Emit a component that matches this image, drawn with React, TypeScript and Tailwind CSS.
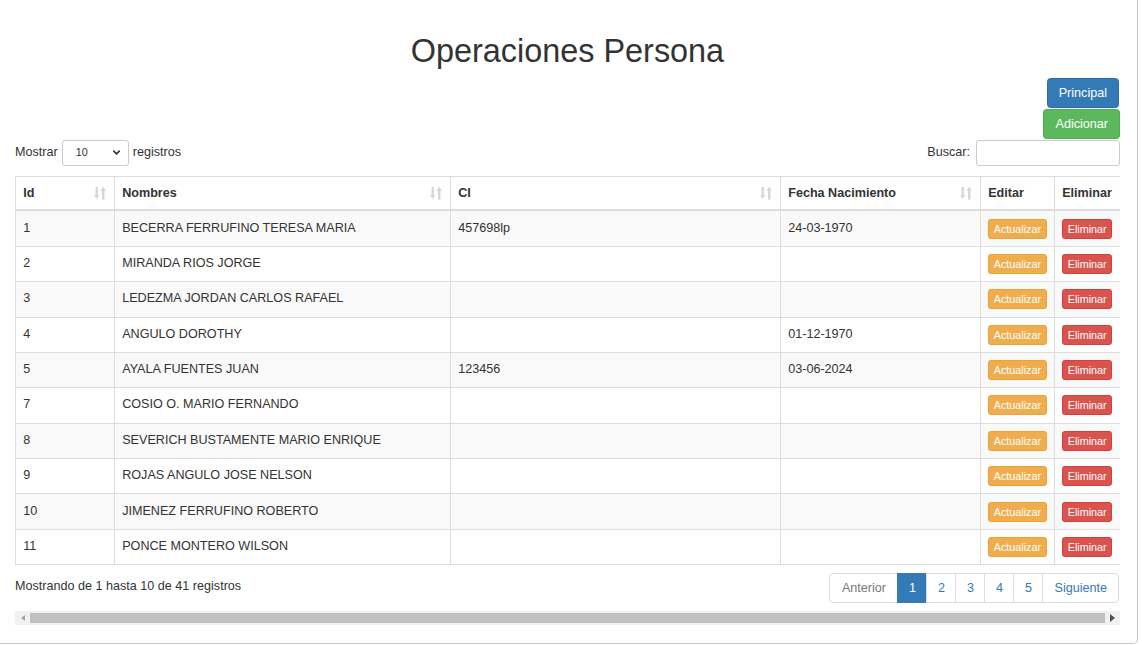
import { ChevronDown } from 'lucide-react';

type Persona = { id: number; nombre: string; ci: string; fecha: string };

const personas: Persona[] = [
  { id: 1, nombre: 'BECERRA FERRUFINO TERESA MARIA', ci: '457698lp', fecha: '24-03-1970' },
  { id: 2, nombre: 'MIRANDA RIOS JORGE', ci: '', fecha: '' },
  { id: 3, nombre: 'LEDEZMA JORDAN CARLOS RAFAEL', ci: '', fecha: '' },
  { id: 4, nombre: 'ANGULO DOROTHY', ci: '', fecha: '01-12-1970' },
  { id: 5, nombre: 'AYALA FUENTES JUAN', ci: '123456', fecha: '03-06-2024' },
  { id: 7, nombre: 'COSIO O. MARIO FERNANDO', ci: '', fecha: '' },
  { id: 8, nombre: 'SEVERICH BUSTAMENTE MARIO ENRIQUE', ci: '', fecha: '' },
  { id: 9, nombre: 'ROJAS ANGULO JOSE NELSON', ci: '', fecha: '' },
  { id: 10, nombre: 'JIMENEZ FERRUFINO ROBERTO', ci: '', fecha: '' },
  { id: 11, nombre: 'PONCE MONTERO WILSON', ci: '', fecha: '' },
];

// icono de orden (flecha abajo + flecha arriba)
function SortIcon() {
  return (
    <svg width="12" height="14" viewBox="0 0 12 14" className="absolute right-[8px] top-[9px]" fill="#d6d6d6">
      <rect x="1.5" y="1" width="2.4" height="9" />
      <path d="M0 9 L5.4 9 L2.7 13 Z" />
      <rect x="8" y="4" width="2.4" height="9.5" />
      <path d="M6.5 5 L11.9 5 L9.2 0.5 Z" />
    </svg>
  );
}

const th = 'relative border border-[#ddd] border-b-2 px-[7.2px] py-[7.2px] text-left font-bold leading-[18px]';
const td = 'border border-[#ddd] px-[7.2px] py-[7.2px] align-top leading-[18px]';

export default function App() {
  return (
    <div className="w-[1138px] h-[644px] bg-white border-r border-b border-[#c8c8c8] rounded-br-[5px] text-[#333] text-[12.6px]" style={{ fontFamily: '"Liberation Sans", Arial, sans-serif' }}>
      <div className="ml-[15px] w-[1105px]">
        <h1 className="pt-[33px] mb-[9px] text-center text-[32.4px] leading-[36px] font-normal">Operaciones Persona</h1>

        <div className="flex flex-col items-end gap-[1px]">
          <button className="h-[30px] px-[11px] mr-[1px] rounded-[3.6px] border border-[#2e6da4] bg-[#337ab7] text-white leading-[18px]">Principal</button>
          <button className="h-[30px] px-[11px] rounded-[3.6px] border border-[#4cae4c] bg-[#5cb85c] text-white leading-[18px]">Adicionar</button>
        </div>

        <div className="flex items-center justify-between h-[27px]">
          <div className="flex items-center">
            <span>Mostrar</span>
            <div className="ml-[4px] w-[67px] h-[26px] border border-[#ccc] rounded-[3px] flex items-center justify-between pl-[13px] pr-[6px] text-[10.8px]">
              <span>10</span>
              <ChevronDown size={11} strokeWidth={3.5} color="#333" />
            </div>
            <span className="ml-[4px]">registros</span>
          </div>
          <div className="flex items-center">
            <span>Buscar:</span>
            <div className="ml-[6px] w-[144px] h-[26px] border border-[#ccc] rounded-[3px]" />
          </div>
        </div>

        <div className="mt-[10px] w-[1105px] overflow-hidden">
          <table className="table-fixed border-collapse w-[1125px]">
            <colgroup>
              <col className="w-[99px]" />
              <col className="w-[336px]" />
              <col className="w-[330px]" />
              <col className="w-[200px]" />
              <col className="w-[74px]" />
              <col className="w-[86px]" />
            </colgroup>
            <thead>
              <tr>
                <th className={th}>Id<SortIcon /></th>
                <th className={th}>Nombres<SortIcon /></th>
                <th className={th}>CI<SortIcon /></th>
                <th className={th}>Fecha Nacimiento<SortIcon /></th>
                <th className={th}>Editar</th>
                <th className={th}>Eliminar</th>
              </tr>
            </thead>
            <tbody>
              {personas.map((p, i) => (
                <tr key={p.id} className={i % 2 === 0 ? 'bg-[#f9f9f9]' : 'bg-white'}>
                  <td className={td}>{p.id}</td>
                  <td className={td}>{p.nombre}</td>
                  <td className={td}>{p.ci}</td>
                  <td className={td}>{p.fecha}</td>
                  <td className={td}>
                    <button className="h-[20px] px-[4.5px] rounded-[2.7px] border border-[#eea236] bg-[#f0ad4e] text-white text-[10.8px] leading-[16px]">Actualizar</button>
                  </td>
                  <td className={td}>
                    <button className="h-[20px] px-[4.5px] rounded-[2.7px] border border-[#d43f3a] bg-[#d9534f] text-white text-[10.8px] leading-[16px]">Eliminar</button>
                  </td>
                </tr>
              ))}
            </tbody>
          </table>
        </div>

        <div className="mt-[8px] flex items-start justify-between">
          <div className="pt-[4px]">Mostrando de 1 hasta 10 de 41 registros</div>
          <div className="flex h-[30px] mr-[1px]">
            <span className="px-[11.5px] leading-[28px] border border-[#ddd] rounded-l-[3.6px] text-[#777]">Anterior</span>
            <span className="w-[30px] text-center leading-[28px] border border-[#337ab7] bg-[#337ab7] text-white -ml-px">1</span>
            <span className="w-[30px] text-center leading-[28px] border border-[#ddd] text-[#337ab7] -ml-px">2</span>
            <span className="w-[30px] text-center leading-[28px] border border-[#ddd] text-[#337ab7] -ml-px">3</span>
            <span className="w-[30px] text-center leading-[28px] border border-[#ddd] text-[#337ab7] -ml-px">4</span>
            <span className="w-[30px] text-center leading-[28px] border border-[#ddd] text-[#337ab7] -ml-px">5</span>
            <span className="px-[11px] leading-[28px] border border-[#ddd] rounded-r-[3.6px] text-[#337ab7] -ml-px">Siguiente</span>
          </div>
        </div>

        {/* barra de desplazamiento horizontal */}
        <div className="mt-[8px] h-[14px] bg-[#f1f1f1] flex items-center">
          <div className="w-[15px] flex justify-center">
            <div className="w-0 h-0 border-y-[3.5px] border-y-transparent border-r-[4px] border-r-[#a3a3a3]" />
          </div>
          <div className="flex-1 h-[10px] bg-[#c1c1c1]" />
          <div className="w-[15px] flex justify-center">
            <div className="w-0 h-0 border-y-[4px] border-y-transparent border-l-[5px] border-l-[#505050]" />
          </div>
        </div>
      </div>
    </div>
  );
}
